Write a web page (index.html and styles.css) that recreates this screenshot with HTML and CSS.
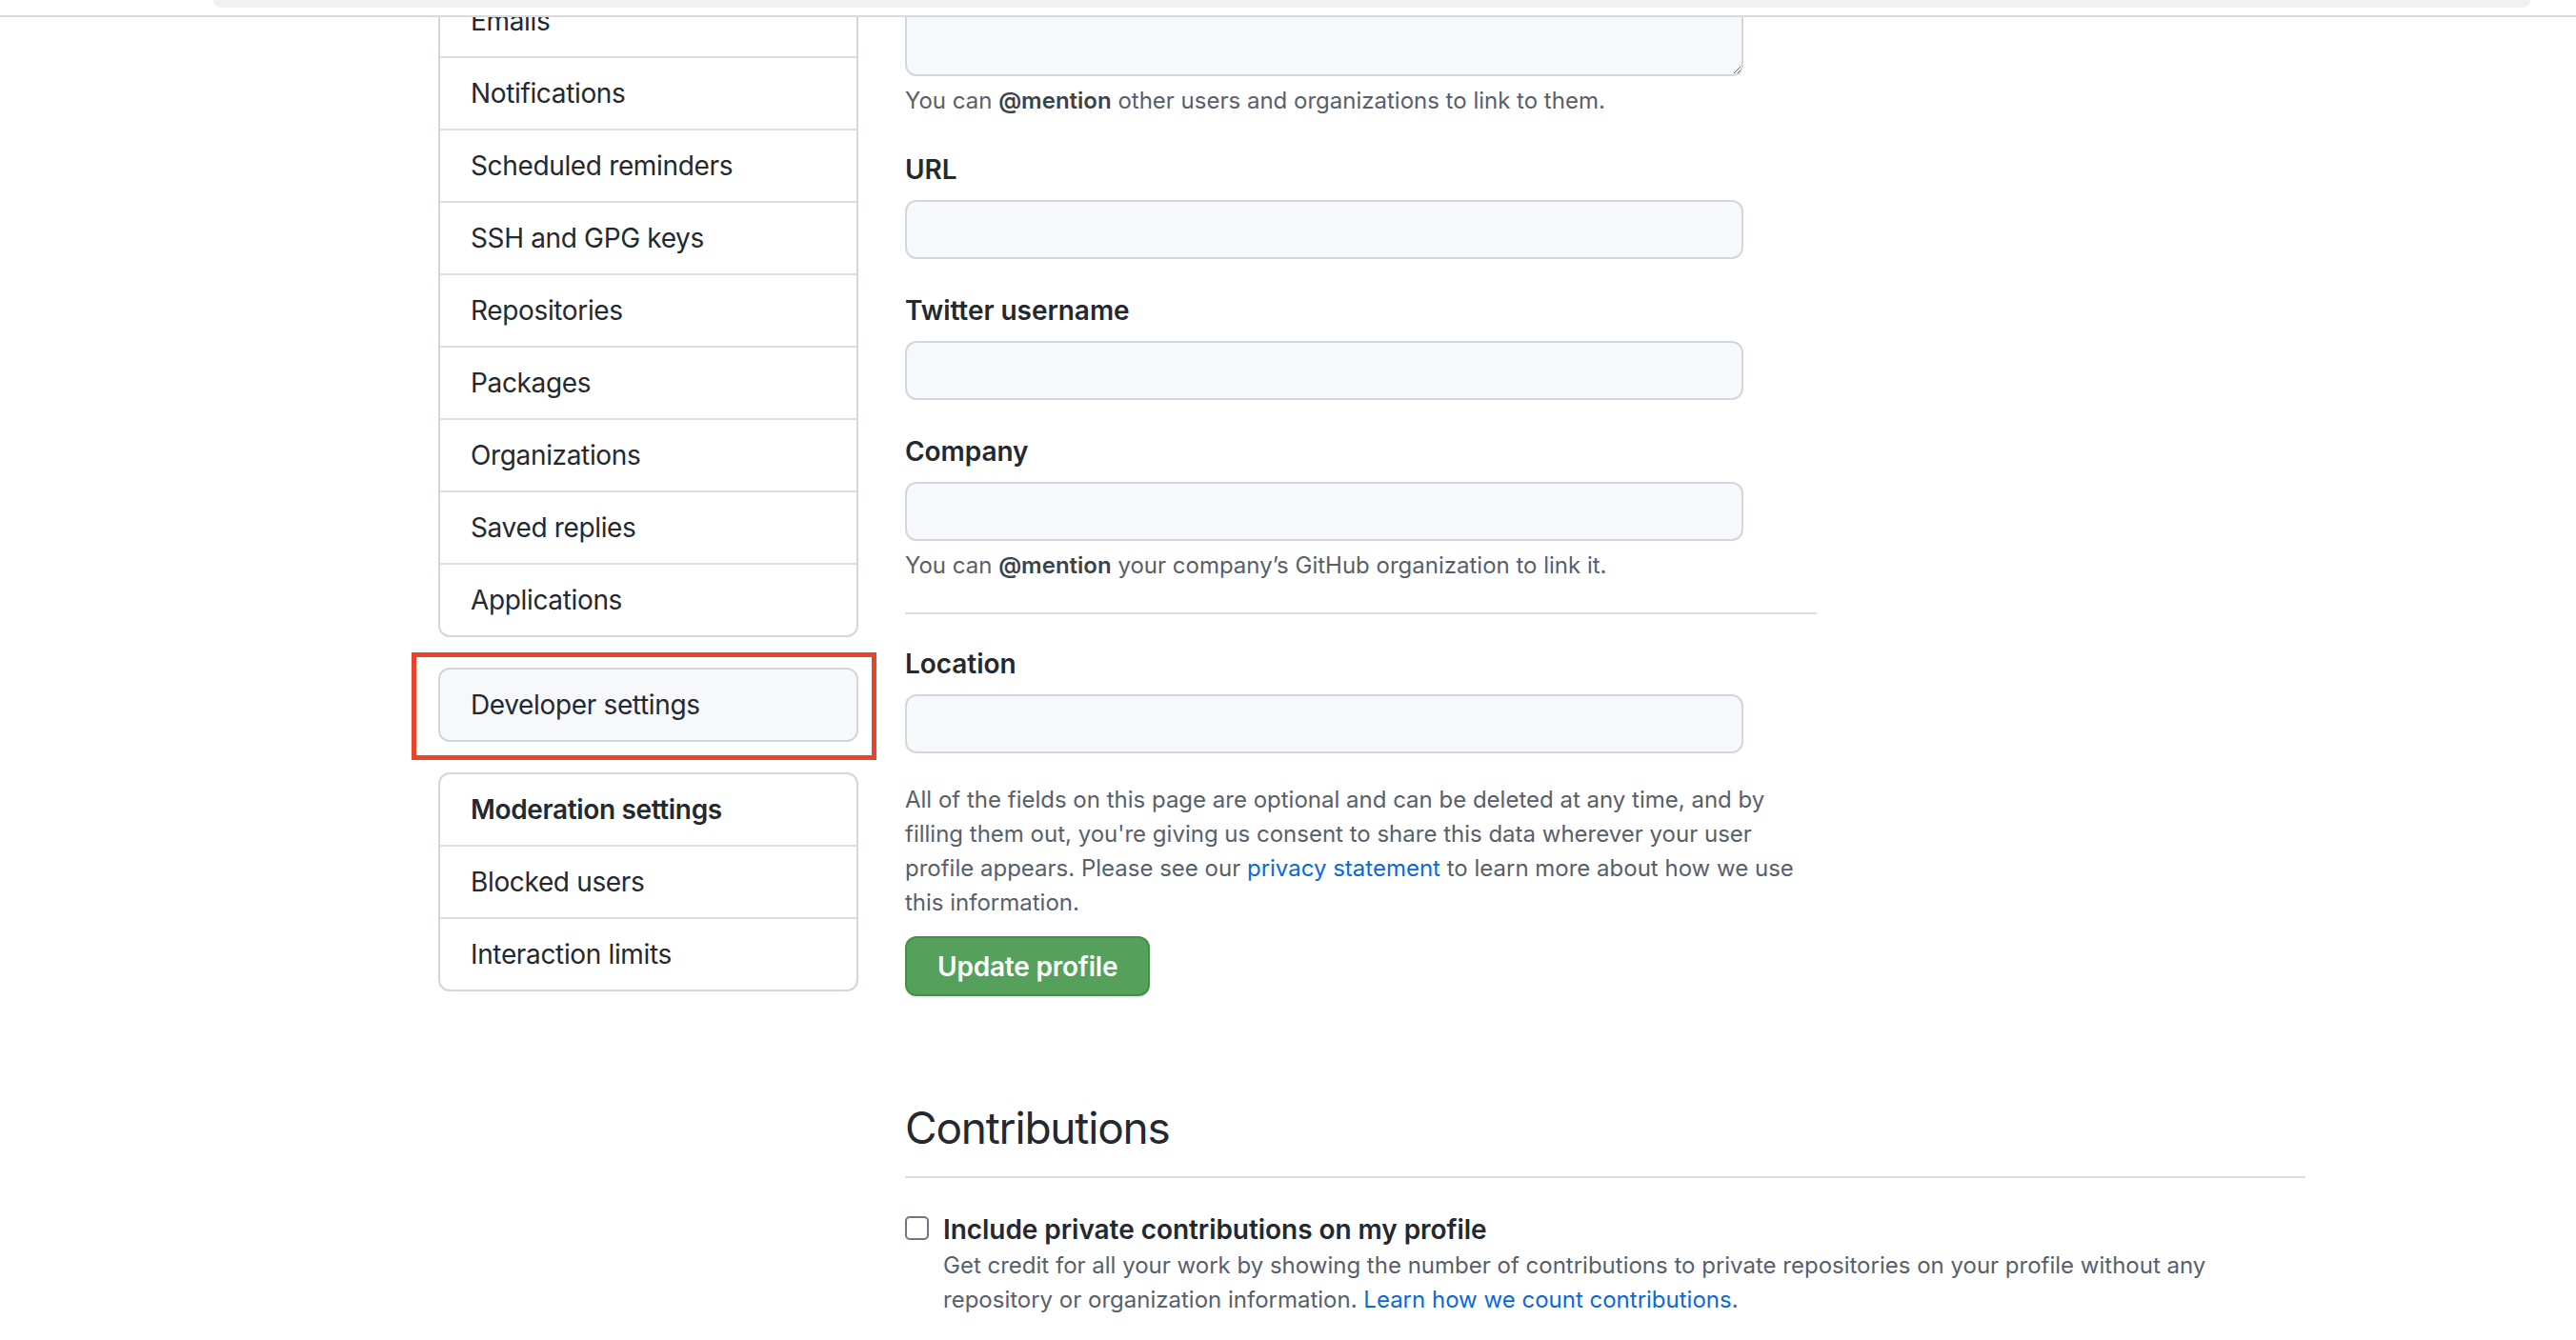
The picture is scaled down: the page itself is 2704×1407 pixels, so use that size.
FILE: index.html
```html
<!DOCTYPE html>
<html lang="en">
<head>
<meta charset="utf-8">
<title>Public profile · Settings</title>
<link rel="stylesheet" href="styles.css">
</head>
<body>
<header class="topbar"><div class="topbar-tab"></div></header>

<div class="layout">
  <nav class="sidebar" aria-label="Settings">
    <div class="menu">
      <a class="menu-item" href="#">Emails</a>
      <a class="menu-item" href="#">Notifications</a>
      <a class="menu-item" href="#">Scheduled reminders</a>
      <a class="menu-item" href="#">SSH and GPG keys</a>
      <a class="menu-item" href="#">Repositories</a>
      <a class="menu-item" href="#">Packages</a>
      <a class="menu-item" href="#">Organizations</a>
      <a class="menu-item" href="#">Saved replies</a>
      <a class="menu-item" href="#">Applications</a>
    </div>
    <div class="menu menu-current">
      <a class="menu-item" href="#">Developer settings</a>
      <span class="callout" aria-hidden="true"></span>
    </div>
    <div class="menu">
      <h3 class="menu-item menu-heading">Moderation settings</h3>
      <a class="menu-item" href="#">Blocked users</a>
      <a class="menu-item" href="#">Interaction limits</a>
    </div>
  </nav>

  <main class="content">
    <form class="profile-form">
      <textarea class="form-control bio" aria-label="Bio"></textarea>
      <p class="note">You can <strong>@mention</strong> other users and organizations to link to them.</p>

      <div class="form-group">
        <label class="label" for="url">URL</label>
        <input class="form-control" id="url" type="text">
      </div>
      <div class="form-group">
        <label class="label" for="twitter">Twitter username</label>
        <input class="form-control" id="twitter" type="text">
      </div>
      <div class="form-group">
        <label class="label" for="company">Company</label>
        <input class="form-control" id="company" type="text">
      </div>
      <p class="note">You can <strong>@mention</strong> your company’s GitHub organization to link it.</p>

      <hr class="divider">

      <div class="form-group form-group-first">
        <label class="label" for="location">Location</label>
        <input class="form-control" id="location" type="text">
      </div>

      <p class="note consent">All of the fields on this page are optional and can be deleted at any time, and by filling them out, you're giving us consent to share this data wherever your user profile appears. Please see our <a href="#">privacy statement</a> to learn more about how we use this information.</p>

      <button class="btn-primary" type="button">Update profile</button>
    </form>

    <section class="contrib">
      <h2 class="subhead">Contributions</h2>
      <div class="check-row">
        <input class="check" type="checkbox" id="private">
        <div class="check-body">
          <label class="label" for="private">Include private contributions on my profile</label>
          <p class="note check-note">Get credit for all your work by showing the number of contributions to private repositories on your profile without any repository or organization information. <a href="#">Learn how we count contributions</a>.</p>
        </div>
      </div>
    </section>
  </main>
</div>
</body>
</html>
```

FILE: styles.css
```css
html, body {
  margin: 0;
  background: #ffffff;
}

body {
  font-family: Inter, "Noto Sans", "Liberation Sans", sans-serif;
  color: #24292f;
  overflow: hidden;
}

a {
  color: #0969da;
  text-decoration: none;
}

.topbar {
  position: fixed;
  top: 0;
  left: 0;
  right: 0;
  height: 16px;
  background: #ffffff;
  border-bottom: 2px solid #d8dadd;
  z-index: 10;
}

.topbar-tab {
  height: 8px;
  margin: 0 48px 0 224px;
  background: #f0f1f3;
  border-radius: 0 0 14px 14px;
}

.layout {
  display: flex;
  align-items: flex-start;
  gap: 49px;
  margin-top: -19px;
  padding-left: 460px;
}

/* ---------- sidebar ---------- */
.sidebar {
  flex: none;
  width: 441px;
  margin-top: 2px;
  display: flex;
  flex-direction: column;
  gap: 32px;
}

.menu {
  position: relative;
  border: 2px solid #d0d7de;
  border-radius: 12px;
  background: #ffffff;
}

.menu-current {
  background: #f6f8fa;
}

.menu-item {
  display: block;
  margin: 0;
  padding: 17px 32px;
  font-size: 28px;
  line-height: 40px;
  font-weight: 400;
  color: #24292f;
  letter-spacing: -0.35px;
}

.menu-item + .menu-item {
  border-top: 2px solid #d8dee4;
}

.menu-heading {
  font-weight: 600;
}

.callout {
  position: absolute;
  left: -30px;
  top: -18px;
  right: -21px;
  bottom: -21px;
  border: 5px solid #e8432b;
  pointer-events: none;
}

/* ---------- main ---------- */
.content {
  flex: none;
  width: 1470px;
}

.profile-form {
  width: 957px;
}

.form-control {
  display: block;
  box-sizing: border-box;
  width: 880px;
  height: 62px;
  margin: 0;
  padding: 0 24px;
  border: 2px solid #d0d7de;
  border-radius: 12px;
  background: #f6f8fa;
  font: inherit;
  font-size: 28px;
  color: #24292f;
  outline: none;
}

.bio {
  height: 99px;
  resize: vertical;
}

.note {
  margin: 8px 0 0;
  font-size: 24px;
  line-height: 36px;
  color: #57606a;
  letter-spacing: 0;
}

.note strong {
  font-weight: 600;
  color: #3b424a;
}

.form-group {
  margin-top: 34px;
}

.form-group-first {
  margin-top: 32px;
}

.label {
  display: block;
  font-size: 28px;
  line-height: 40px;
  font-weight: 600;
  color: #24292f;
  letter-spacing: -0.05px;
}

.form-group .form-control {
  margin-top: 12px;
}

.divider {
  height: 0;
  margin: 31px 0 0;
  border: 0;
  border-top: 2px solid #d8dee4;
}

.consent {
  width: 940px;
  margin-top: 31px;
}

.btn-primary {
  display: block;
  height: 63px;
  margin-top: 17px;
  padding: 0 32px;
  border: 2px solid rgba(40, 110, 50, 0.35);
  border-radius: 12px;
  background: #55a15c;
  color: #ffffff;
  font: inherit;
  font-size: 28px;
  font-weight: 600;
  letter-spacing: -0.2px;
  box-shadow: 0 2px 0 rgba(27, 31, 36, 0.08);
}

/* ---------- contributions ---------- */
.contrib {
  margin-top: 102px;
}

.subhead {
  margin: 0;
  padding-bottom: 15px;
  border-bottom: 2px solid #d8dee4;
  font-size: 46px;
  line-height: 72px;
  font-weight: 400;
  letter-spacing: -1.2px;
}

.check-row {
  display: flex;
  align-items: flex-start;
  gap: 15px;
  margin-top: 34px;
}

.check {
  appearance: none;
  -webkit-appearance: none;
  flex: none;
  width: 25px;
  height: 25px;
  margin: 6px 0 0;
  border: 2px solid #6e7781;
  border-radius: 5px;
  background: #ffffff;
}

.check-body {
  flex: 1;
}

.check-note {
  max-width: 1390px;
  margin-top: 0;
}
```
